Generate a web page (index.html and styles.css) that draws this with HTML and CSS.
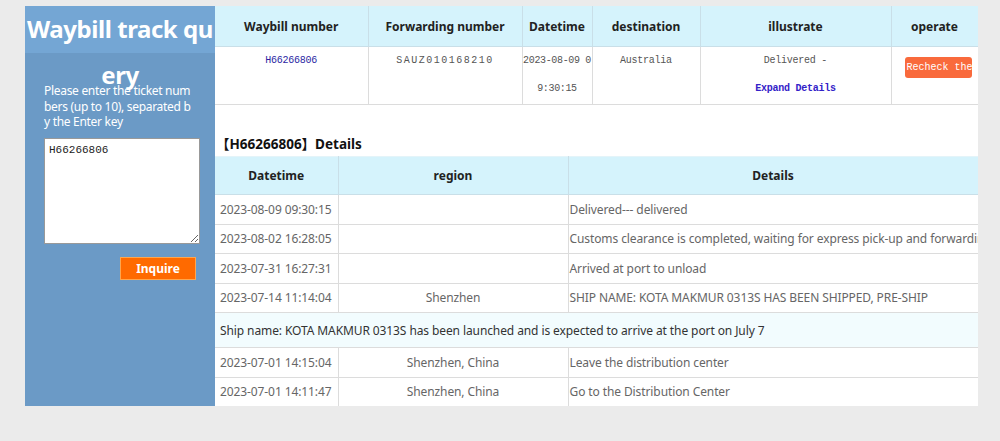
FILE: index.html
```html
<!DOCTYPE html>
<html>
<head>
<meta charset="utf-8">
<title>Waybill track query</title>
<link rel="stylesheet" href="styles.css">
</head>
<body>
<div class="page">
  <aside class="sidebar">
    <h1 class="side-title">Waybill track query</h1>
    <p class="side-hint">Please enter the ticket numbers (up to 10), separated by the Enter key</p>
    <textarea class="side-input">H66266806</textarea>
    <div class="side-actions"><button class="btn-inquire">Inquire</button></div>
  </aside>
  <main class="main">
    <table class="track-table">
      <colgroup>
        <col style="width:153px"><col style="width:154px"><col style="width:70px"><col style="width:108px"><col style="width:191px"><col style="width:87px">
      </colgroup>
      <thead>
        <tr><th>Waybill number</th><th>Forwarding number</th><th>Datetime</th><th>destination</th><th>illustrate</th><th>operate</th></tr>
      </thead>
      <tbody>
        <tr>
          <td><span class="link">H66266806</span></td>
          <td class="fwd">SAUZ010168210</td>
          <td class="dt">2023-08-09 09:30:15</td>
          <td>Australia</td>
          <td>Delivered -<br><span class="expand">Expand Details</span></td>
          <td><span class="btn-recheck">Recheck the</span></td>
        </tr>
      </tbody>
    </table>
    <div class="details-title">【H66266806】Details</div>
    <table class="details-table">
      <colgroup>
        <col style="width:123px"><col style="width:230px"><col style="width:410px">
      </colgroup>
      <thead>
        <tr><th>Datetime</th><th>region</th><th>Details</th></tr>
      </thead>
      <tbody>
        <tr><td class="c-time">2023-08-09 09:30:15</td><td class="c-region"></td><td class="c-desc">Delivered--- delivered</td></tr>
        <tr><td class="c-time">2023-08-02 16:28:05</td><td class="c-region"></td><td class="c-desc">Customs clearance is completed, waiting for express pick-up and forwarding</td></tr>
        <tr><td class="c-time">2023-07-31 16:27:31</td><td class="c-region"></td><td class="c-desc">Arrived at port to unload</td></tr>
        <tr><td class="c-time">2023-07-14 11:14:04</td><td class="c-region">Shenzhen</td><td class="c-desc">SHIP NAME: KOTA MAKMUR 0313S HAS BEEN SHIPPED, PRE-SHIP</td></tr>
        <tr class="note-row"><td colspan="3">Ship name: KOTA MAKMUR 0313S has been launched and is expected to arrive at the port on July 7</td></tr>
        <tr><td class="c-time">2023-07-01 14:15:04</td><td class="c-region">Shenzhen, China</td><td class="c-desc">Leave the distribution center</td></tr>
        <tr><td class="c-time">2023-07-01 14:11:47</td><td class="c-region">Shenzhen, China</td><td class="c-desc">Go to the Distribution Center</td></tr>
      </tbody>
    </table>
  </main>
</div>
</body>
</html>
```
FILE: styles.css
```css
html, body {
  margin: 0;
  padding: 0;
  background: #ebebeb;
}
body {
  font-family: "Noto Sans", "Noto Sans CJK SC", sans-serif;
}
.page {
  display: flex;
  margin: 6px 0 0 25px;
  width: 953px;
  height: 400px;
}
.sidebar {
  width: 190px;
  flex: none;
  background: #6b9ac6;
}
.side-title {
  margin: 0;
  height: 47px;
  line-height: 46px;
  background: #74a6d4;
  color: #fff;
  font-size: 24px;
  font-weight: bold;
  letter-spacing: -0.45px;
  text-align: center;
  word-break: break-all;
}
.side-hint {
  margin: 30px 0 0;
  padding: 0 19px;
  color: #fff;
  font-size: 12px;
  line-height: 15.5px;
  letter-spacing: -0.3px;
  word-break: break-all;
}
.side-input {
  display: block;
  box-sizing: border-box;
  width: 156px;
  height: 106px;
  margin: 8px 0 0 19px;
  padding: 5px 4px;
  border: 1px solid #999;
  font-family: "Liberation Mono", monospace;
  font-size: 11px;
  color: #222;
  background: #fff;
}
.side-actions {
  margin-top: 12px;
  padding-right: 19px;
  text-align: right;
}
.btn-inquire {
  width: 76px;
  height: 23px;
  padding: 0;
  border: 1px solid #ffa64d;
  background: #ff6a00;
  color: #fff;
  font-family: "Noto Sans", sans-serif;
  font-size: 12px;
  font-weight: bold;
}
.main {
  width: 763px;
  flex: none;
  background: #fff;
  overflow: hidden;
}
.track-table, .details-table {
  width: 763px;
  table-layout: fixed;
  border-collapse: collapse;
}
.track-table th, .details-table th {
  background: #d5f3fc;
  color: #222;
  font-size: 12px;
  font-weight: bold;
  border: 1px solid #c9dfe8;
  border-top: none;
  padding: 0;
}
.track-table th {
  height: 40px;
}
.track-table td {
  height: 57px;
  padding: 0;
  vertical-align: top;
  text-align: center;
  line-height: 28px;
  font-family: "Liberation Mono", monospace;
  font-size: 10px;
  letter-spacing: -0.25px;
  color: #555;
  border: 1px solid #dcdcdc;
  border-top: none;
}
.track-table th:first-child, .track-table td:first-child,
.details-table th:first-child, .details-table td:first-child {
  border-left: none;
}
.track-table td.fwd {
  letter-spacing: 1.5px;
}
.track-table td.dt {
  word-break: break-all;
  letter-spacing: -0.35px;
}
.link {
  color: #2b1fa3;
}
.expand {
  color: #3322c8;
  font-weight: bold;
}
.btn-recheck {
  display: block;
  width: 67px;
  height: 21px;
  margin: 10px 0 0 13px;
  padding-left: 2px;
  box-sizing: border-box;
  line-height: 21px;
  border-radius: 3px;
  background: #f96a3c;
  color: #fff;
  letter-spacing: 0;
  text-align: left;
  white-space: nowrap;
  overflow: hidden;
}
.details-title {
  box-sizing: border-box;
  height: 51px;
  padding: 28px 0 0 1px;
  line-height: 22px;
  font-size: 13.5px;
  font-weight: bold;
  color: #111;
}
.details-table th {
  height: 37px;
  border-top: 1px solid #e4f4f9;
}
.details-table td {
  height: 28.5px;
  padding: 0;
  font-size: 12px;
  letter-spacing: -0.1px;
  color: #666;
  border: 1px solid #dcdcdc;
  white-space: nowrap;
  overflow: hidden;
}
.details-table td.c-time {
  padding-left: 5px;
}
.details-table td.c-region {
  text-align: center;
}
.details-table td.c-desc {
  padding-left: 1px;
}
.details-table .note-row td {
  height: 34px;
  padding-left: 5px;
  background: #f2fcfe;
  color: #333;
}
```
